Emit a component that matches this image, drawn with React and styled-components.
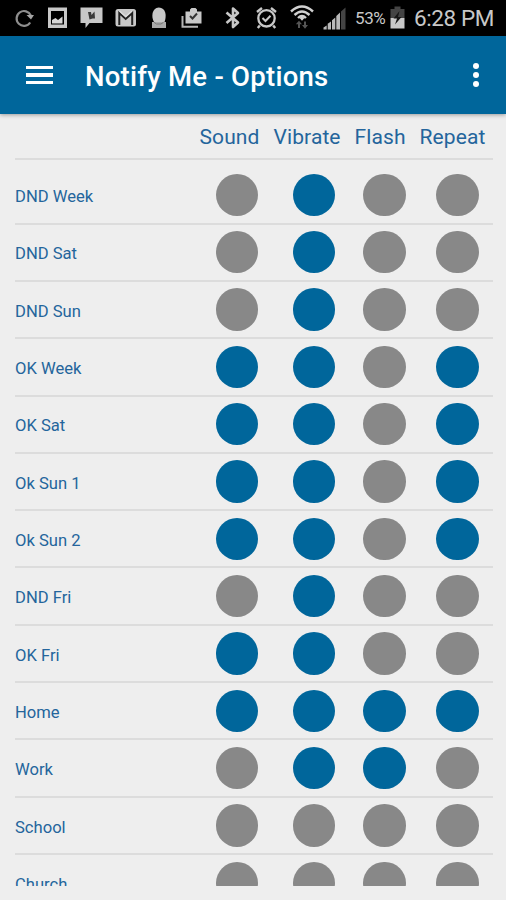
import React from "react";
import styled, { createGlobalStyle } from "styled-components";

const colors = {
  blue: "#00669b",
  text: "#24659c",
  grey: "#888888",
  line: "#dcdcdc",
  background: "#eeeeee",
  status: "#c8c8c8",
};

const GlobalStyle = createGlobalStyle`
  body {
    margin: 0;
    background: ${colors.background};
    font-family: Roboto, sans-serif;
  }
`;

const Screen = styled.div`
  display: flex;
  flex-direction: column;
  width: 506px;
  height: 900px;
  overflow: hidden;
  background: ${colors.background};
`;

const StatusBar = styled.div`
  display: flex;
  flex: none;
  height: 36px;
  background: #000;
  color: ${colors.status};
`;

const Glyph = styled.svg`
  flex: none;
  display: block;
  margin-left: ${({ $gap }) => $gap}px;
`;

const StatusText = styled.span`
  flex: none;
  margin-left: ${({ $gap }) => $gap}px;
  width: ${({ $width }) => $width}px;
  font-size: ${({ $size }) => $size}px;
  line-height: 37px;
  letter-spacing: ${({ $spacing }) => $spacing || 0}px;
  white-space: nowrap;
`;

const AppBar = styled.header`
  display: flex;
  flex: none;
  align-items: center;
  height: 78px;
  padding: 0 27px 0 26px;
  background: ${colors.blue};
  box-shadow: 0 1px 4px rgba(0, 0, 0, 0.35);
  color: #fff;
`;

const MenuButton = styled.button`
  display: flex;
  flex-direction: column;
  gap: 3.9px;
  width: 27px;
  padding: 0;
  border: 0;
  background: none;
`;

const MenuBar = styled.span`
  height: 3.7px;
  background: #fff;
`;

const Title = styled.h1`
  flex: 1;
  margin: 0 0 0 32px;
  padding-top: 3px;
  font-size: 27.5px;
  font-weight: 500;
  line-height: 32px;
  letter-spacing: 0.25px;
`;

const MoreButton = styled(MenuButton)`
  gap: 2.7px;
  width: 6.3px;
`;

const Dot = styled.span`
  width: 6.3px;
  height: 6.3px;
  border-radius: 50%;
  background: #fff;
`;

const Columns = styled.div`
  display: flex;
  flex: none;
  justify-content: flex-end;
  gap: 15px;
  box-sizing: border-box;
  height: 46px;
  margin: 0 13px 0 15px;
  padding: 10px 7.5px 0 0;
  border-bottom: 2px solid ${colors.line};
  color: ${colors.text};
  font-size: 21px;
  line-height: 26px;
  letter-spacing: 0.1px;
`;

const Column = styled.span`
  width: ${({ $width }) => $width}px;
  white-space: nowrap;
`;

const List = styled.div`
  flex: none;
  box-sizing: border-box;
  height: 726px;
  padding: 7.2px 13px 0 15px;
  overflow: hidden;
`;

const Row = styled.div`
  display: grid;
  grid-template-columns: 200.5px 77.3px 70.4px 73px 43px;
  align-items: center;
  box-sizing: border-box;
  height: 57.33px;
  border-bottom: 2px solid ${colors.line};
`;

const Label = styled.span`
  padding-top: 4.4px;
  color: ${colors.text};
  font-size: 16.6px;
  line-height: 22px;
  white-space: nowrap;
`;

const Toggle = styled.button`
  width: 42.5px;
  height: 42.5px;
  padding: 0;
  border: 0;
  border-radius: 50%;
  background: ${({ $on }) => ($on ? colors.blue : colors.grey)};
`;

// on/off per column: sound, vibrate, flash, repeat
const rows = [
  ["DND Week", [0, 1, 0, 0]],
  ["DND Sat", [0, 1, 0, 0]],
  ["DND Sun", [0, 1, 0, 0]],
  ["OK Week", [1, 1, 0, 1]],
  ["OK Sat", [1, 1, 0, 1]],
  ["Ok Sun 1", [1, 1, 0, 1]],
  ["Ok Sun 2", [1, 1, 0, 1]],
  ["DND Fri", [0, 1, 0, 0]],
  ["OK Fri", [1, 1, 0, 0]],
  ["Home", [1, 1, 1, 1]],
  ["Work", [0, 1, 1, 0]],
  ["School", [0, 0, 0, 0]],
  ["Church", [0, 0, 0, 0]],
];

const Icon = ({ gap, width, children }) => (
  <Glyph $gap={gap} width={width} height="36" viewBox={`0 0 ${width} 36`} fill="none" stroke="none">
    {children}
  </Glyph>
);

const StatusIcons = () => (
  <>
    <Icon gap={14} width={21}>
      <path d="M16.2 22.5A7.4 7.4 0 1 1 16.8 15.5" stroke="#8e8e8e" strokeWidth="2.2" />
      <path d="M12.5 15H20L17 19.5Z" fill="#a5a5a5" />
    </Icon>
    <Icon gap={12} width={21}>
      <path fillRule="evenodd" d="M1 7.5H20V28H1ZM4 11V24.5H17V11Z" fill="#c8c8c8" />
      <path d="M5 23.5V20L8.5 18L11 20L15.5 16.5V23.5Z" fill="#d8d8d8" />
    </Icon>
    <Icon gap={12} width={23}>
      <path d="M0.5 7.5H22.5V23H9.5L5.5 28V23H0.5Z" fill="#c8c8c8" />
      <path d="M8 12H11L11.5 15L14.5 11.5L15 18.5H12.5L9.5 19.5Z" fill="#3a3a3a" />
    </Icon>
    <Icon gap={12} width={22}>
      <rect x="0.5" y="9" width="20.5" height="17.5" rx="2.5" fill="#c8c8c8" />
      <path d="M4.3 25V13L10.7 19L17.2 13V25" stroke="#222" strokeWidth="2" />
      <path d="M4.5 11L10.7 16.5L17 11" stroke="#dedede" strokeWidth="1.4" />
    </Icon>
    <Icon gap={13} width={17}>
      <path d="M4 22C1 17 1.8 8 8.8 7.5C16 7.5 16.8 16 14.5 22Z" fill="#c8c8c8" />
      <path d="M2 22H16V28H2Z" fill="#aaa" />
      <path d="M4 22.3L6.5 24H11L13.5 22.3" stroke="#777" strokeWidth="1" />
    </Icon>
    <Icon gap={14} width={22}>
      <path d="M1.5 16V26.8H17" stroke="#b5b5b5" strokeWidth="2" />
      <path d="M4.5 11.5H9V9.5L10.5 8H14.5L16 9.5V11.5H20.5V23.5H4.5Z" fill="#c8c8c8" />
      <path d="M9 16L11.5 18.5L16 13.5" stroke="#333" strokeWidth="2" />
    </Icon>
    <Icon gap={21} width={17}>
      <path
        d="M2.5 12.5L14 22.5L9 27V8.5L14 13L2.5 23"
        stroke="#c8c8c8"
        strokeWidth="2.6"
        strokeLinejoin="round"
      />
    </Icon>
    <Icon gap={14} width={23}>
      <circle cx="11.5" cy="18.3" r="8.2" stroke="#c8c8c8" strokeWidth="2.3" />
      <path d="M7.5 18L10.5 21L15.5 15.8" stroke="#c8c8c8" strokeWidth="2" />
      <path d="M2 12L7 8M21 12L16 8M4.8 25.5L2.8 28M18.2 25.5L20.2 28" stroke="#c8c8c8" strokeWidth="2.4" />
    </Icon>
    <Icon gap={12} width={24}>
      <path d="M1 11.5Q12 1.5 23 11.5M4.5 15Q12 8 19.5 15M8 18Q12 14.2 16 18" stroke="#d0d0d0" strokeWidth="2.4" />
      <path d="M9.5 18L12 16.3L14.5 18L12 20.8Z" fill="#d0d0d0" />
      <path d="M9 28V23M15 21.5V27" stroke="#555" strokeWidth="2" />
      <path d="M5.8 24.3L9 20.8L12 24.3ZM12 25L15 28.8L18 25Z" fill="#555" />
    </Icon>
    <Icon gap={9} width={23}>
      <path d="M0.5 29.5V27.5L3.7 25.5V29.5ZM4.7 29.5V23.8L8 21.5V29.5ZM9 29.5V20.2L12.3 17.5V29.5ZM13.3 29.5V16L17 12.5V29.5Z" fill="#b8b8b8" />
      <path d="M18 29.5V11.5L22.5 7.5V29.5Z" fill="#444" />
    </Icon>
    <StatusText $gap={9} $width={31} $size={17} $spacing={-0.4}>53%</StatusText>
    <Icon gap={4} width={15}>
      <path d="M0.5 9H4.5V6.5H10.5V9H14.5V18H0.5Z" fill="#444" />
      <path d="M0.5 18H14.5V28.5H0.5Z" fill="#c8c8c8" />
      <path d="M9.5 11L3.5 18.5H7L5 24.5L11.5 17H8Z" fill="#161616" />
    </Icon>
    <StatusText $gap={9} $width={80} $size={22.5} $spacing={-0.4}>6:28 PM</StatusText>
  </>
);

const OptionRow = ({ name, values }) => (
  <Row>
    <Label>{name}</Label>
    {values.map((on, index) => <Toggle key={index} $on={on} />)}
  </Row>
);

const App = () => {
  return (
    <>
      <GlobalStyle />
      <Screen>
        <StatusBar>
          <StatusIcons />
        </StatusBar>
        <AppBar>
          <MenuButton>
            <MenuBar />
            <MenuBar />
            <MenuBar />
          </MenuButton>
          <Title>Notify Me - Options</Title>
          <MoreButton>
            <Dot />
            <Dot />
            <Dot />
          </MoreButton>
        </AppBar>
        <Columns>
          <Column $width={59}>Sound</Column>
          <Column $width={66}>Vibrate</Column>
          <Column $width={50}>Flash</Column>
          <Column $width={66}>Repeat</Column>
        </Columns>
        <List>
          {rows.map(([name, values]) => <OptionRow key={name} name={name} values={values} />)}
        </List>
      </Screen>
    </>
  );
};

export default App;
